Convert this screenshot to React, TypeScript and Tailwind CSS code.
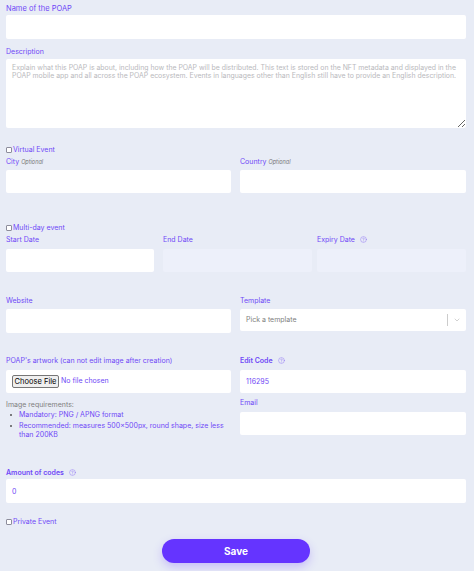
import { ChevronDown, CircleHelp } from 'lucide-react';

const labelClass = 'block h-[10px] text-[7px] leading-[12px] text-[#6f48f6]';
const inputClass = 'block w-full h-[23px] bg-white rounded-[2px] px-[6px] text-[7px] text-[#6f48f6] outline-none';

function CheckRow({ label, className }: { label: string; className: string }) {
  return (
    <label className={`flex items-center h-[10px] text-[7px] leading-[12px] text-[#6f48f6] ${className}`}>
      <span className="w-[6px] h-[6px] mr-px bg-white border border-[#8d8d9c] rounded-[1px]" />
      {label}
    </label>
  );
}

function Help() {
  return <CircleHelp className="inline-block align-[-1px] w-[7px] h-[7px] ml-[5px] text-[#8a6cf5]" strokeWidth={1.5} />;
}

export default function App() {
  return (
    <div className="w-[474px] h-[571px] overflow-hidden bg-[#e8ecf6] pl-[6px] pr-[8px] pt-[3px] font-['Inter',sans-serif]">
      <label className={`${labelClass} !text-[7.5px]`}>Name of the POAP</label>
      <input className={`${inputClass} !h-[24px] mt-[2px]`} />

      <label className={`${labelClass} mt-[7px]`}>Description</label>
      <textarea
        readOnly
        className="block w-full h-[69px] mt-[3px] bg-white rounded-[2px] px-[6px] py-[5px] text-[6.9px] leading-[8px] outline-none resize placeholder:text-[#b9b9bd]"
        placeholder="Explain what this POAP is about, including how the POAP will be distributed. This text is stored on the NFT metadata and displayed in the POAP mobile app and all across the POAP ecosystem. Events in languages other than English still have to provide an English description."
      />

      <CheckRow label="Virtual Event" className="mt-[17px]" />
      <div className="grid grid-cols-[225px_226px] gap-x-[9px] mt-[1px]">
        <div>
          <label className={labelClass}>
            City <i className="text-[5.5px] text-[#777]">Optional</i>
          </label>
          <input className={`${inputClass} mt-[4px]`} />
        </div>
        <div>
          <label className={labelClass}>
            Country <i className="text-[5.5px] text-[#777]">Optional</i>
          </label>
          <input className={`${inputClass} mt-[4px]`} />
        </div>
      </div>

      <CheckRow label="Multi-day event" className="mt-[30px]" />
      <div className="flex mt-[1px]">
        <div className="w-[148px]">
          <label className={labelClass}>Start Date</label>
          <input className={`${inputClass} mt-[5px]`} />
        </div>
        <div className="w-[149px] ml-[9px]">
          <label className={labelClass}>End Date</label>
          <input disabled className={`${inputClass} mt-[5px] !bg-[#edf0fa]`} />
        </div>
        <div className="flex-1 ml-[5px]">
          <label className={labelClass}>
            Expiry Date
            <Help />
          </label>
          <input disabled className={`${inputClass} mt-[5px] !bg-[#edf0fa]`} />
        </div>
      </div>

      <div className="grid grid-cols-[225px_226px] gap-x-[9px] mt-[23px]">
        <div>
          <label className={labelClass}>Website</label>
          <input className={`${inputClass} !h-[24px] mt-[4px]`} />
        </div>
        <div>
          <label className={labelClass}>Template</label>
          <div className="flex items-center h-[22px] mt-[4px] bg-white rounded-[2px] pl-[6px] text-[7px] text-[#808080]">
            <span className="flex-1">Pick a template</span>
            <span className="w-px h-[12px] bg-[#cccccc]" />
            <ChevronDown className="w-[8px] h-[8px] mx-[5px] text-[#bbbbbb]" />
          </div>
        </div>
      </div>

      <div className="grid grid-cols-[225px_226px] gap-x-[9px] mt-[22px]">
        <div>
          <label className={labelClass}>POAP's artwork (can not edit image after creation)</label>
          <div className="flex items-center h-[23px] mt-[5px] bg-white rounded-[2px] pl-[6px] text-[7px] text-[#6f48f6]">
            <button className="h-[13px] w-[47px] mr-[2px] bg-[#efefef] border border-[#767676] rounded-[2px] text-[7.5px] text-black">
              Choose File
            </button>
            No file chosen
          </div>
          <p className="h-[10px] mt-[6px] text-[7px] leading-[12px] text-[#808080]">Image requirements:</p>
          <ul className="mt-[1px] pl-[4px] pr-[6px] text-[7px] leading-[9px] text-[#6f48f6] [&>li+li]:mt-[2px]">
            <li className="flex">
              <span className="shrink-0 w-[2px] h-[2px] mt-[4px] mr-[7px] rounded-full bg-[#555]" />
              Mandatory: PNG / APNG format
            </li>
            <li className="flex">
              <span className="shrink-0 w-[2px] h-[2px] mt-[4px] mr-[7px] rounded-full bg-[#555]" />
              Recommended: measures 500x500px, round shape, size less than 200KB
            </li>
          </ul>
        </div>
        <div>
          <label className={`${labelClass} font-semibold`}>
            Edit Code
            <Help />
          </label>
          <input readOnly value="116295" className={`${inputClass} mt-[5px]`} />
          <label className={`${labelClass} mt-[4px]`}>Email</label>
          <input className={`${inputClass} mt-[5px]`} />
        </div>
      </div>

      <label className={`${labelClass} font-semibold mt-[28px]`}>
        Amount of codes
        <Help />
      </label>
      <input readOnly value="0" className={`${inputClass} !h-[24px] mt-[2px]`} />

      <CheckRow label="Private Event" className="mt-[14px]" />

      <div className="flex justify-center mt-[12px]">
        <button className="w-[148px] h-[24px] rounded-full bg-[#6534ff] text-white text-[10px] font-bold shadow-[0_4px_10px_rgba(101,52,255,0.25)]">
          Save
        </button>
      </div>
    </div>
  );
}
